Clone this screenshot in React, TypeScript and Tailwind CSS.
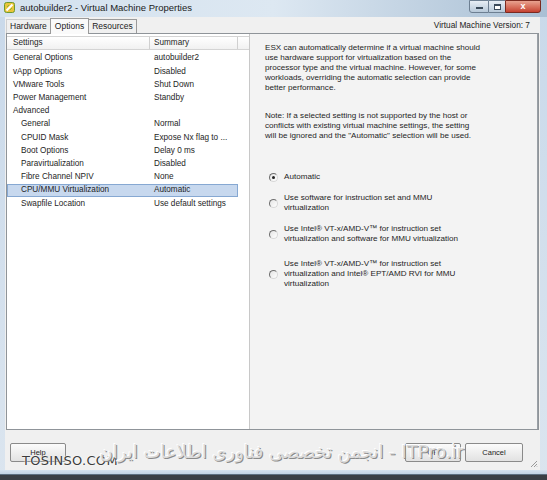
import React from "react";

const rows: { name: string; summary: string; indent?: boolean; selected?: boolean }[] = [
  { name: "General Options", summary: "autobuilder2" },
  { name: "vApp Options", summary: "Disabled" },
  { name: "VMware Tools", summary: "Shut Down" },
  { name: "Power Management", summary: "Standby" },
  { name: "Advanced", summary: "" },
  { name: "General", summary: "Normal", indent: true },
  { name: "CPUID Mask", summary: "Expose Nx flag to ...", indent: true },
  { name: "Boot Options", summary: "Delay 0 ms", indent: true },
  { name: "Paravirtualization", summary: "Disabled", indent: true },
  { name: "Fibre Channel NPIV", summary: "None", indent: true },
  { name: "CPU/MMU Virtualization", summary: "Automatic", indent: true, selected: true },
  { name: "Swapfile Location", summary: "Use default settings", indent: true },
];

function Radio({ checked }: { checked?: boolean }) {
  return (
    <div className="w-[9px] h-[9px] shrink-0 rounded-full border border-l-[#6f6f6f] border-t-[#6f6f6f] border-r-[#d8d8d8] border-b-[#d8d8d8] bg-gradient-to-br from-[#e4e4e4] to-white flex items-center justify-center">
      {checked && <div className="w-[3px] h-[3px] rounded-full bg-[#222]" />}
    </div>
  );
}

function Btn({ label, w }: { label: string; w: string }) {
  return (
    <div
      className={`${w} h-[19px] rounded-[2px] border border-[#8a8a8a] bg-gradient-to-b from-[#fbfbfb] to-[#e2e2e2] flex items-center justify-center text-[7.5px] text-[#222]`}
    >
      {label}
    </div>
  );
}

export default function App() {
  return (
    <div className="w-[547px] h-[480px] relative overflow-hidden flex flex-col bg-gradient-to-b from-[#c9d9ea] to-[#dbe5ef] font-['Liberation_Sans',Arial,sans-serif] text-[#1e1e1e]">
      {/* Title bar */}
      <div className="h-[17px] shrink-0 flex items-start bg-gradient-to-r from-[#d3e1ee] via-[#dde8f2] to-[#a9bfd4]">
        <svg className="ml-[4px] mt-[2px]" width="11" height="11" viewBox="0 0 11 11">
          <rect x="0.5" y="0.5" width="10" height="10" rx="2" fill="#e9c53a" stroke="#6e9a2e" />
          <path d="M2.5 8.5 L8.5 2.5" stroke="#ffffff" strokeWidth="2" />
          <path d="M3 5 L5 3 M6 8 L8 6" stroke="#8fae3c" strokeWidth="1" />
        </svg>
        <div className="ml-[5px] text-[9.5px] leading-[15px] text-[#1b1b1b]">autobuilder2 - Virtual Machine Properties</div>
        <div className="ml-auto mr-[6px] flex h-[13px]">
          <div className="w-[20px] h-full border border-[#6d7f92] rounded-bl-[3px] bg-gradient-to-b from-[#e7eef5] to-[#b7c8d9] flex items-end justify-center pb-[3px]">
            <div className="w-[7px] h-[2px] border border-[#3a4a5a] bg-white" />
          </div>
          <div className="w-[16px] h-full border-y border-[#6d7f92] bg-gradient-to-b from-[#e7eef5] to-[#b7c8d9] flex items-center justify-center">
            <div className="w-[7px] h-[6px] border border-[#3a4a5a] border-t-2 bg-white" />
          </div>
          <div className="w-[36px] h-full border border-[#7a2a20] rounded-br-[3px] bg-gradient-to-b from-[#e8a290] to-[#c54030] flex items-center justify-center text-white text-[9px] font-bold leading-none">
            x
          </div>
        </div>
      </div>

      {/* Client area */}
      <div className="ml-[5px] w-[535px] h-[453px] shrink-0 bg-[#f0f0f0] flex flex-col">
        {/* Tabs */}
        <div className="h-[16px] shrink-0 flex items-end pl-[1px] text-[8.5px]">
          <div className="h-[14px] px-[3px] flex items-center border border-b-0 border-r-0 border-[#d0d0d0] text-[#222]">Hardware</div>
          <div className="h-[16px] px-[4px] flex items-center border border-b-0 border-[#9a9a9a] bg-[#fafafa] text-[#222] relative top-[1px]">Options</div>
          <div className="h-[14px] px-[3px] flex items-center border border-b-0 border-l-0 border-[#9a9a9a] text-[#222]">Resources</div>
          <div className="ml-auto mr-[10px] self-center text-[8.3px] text-[#222]">Virtual Machine Version: 7</div>
        </div>

        {/* Tab page */}
        <div className="ml-[1px] w-[533px] h-[397px] shrink-0 border border-[#8f9499] bg-white flex">
          {/* Left list */}
          <div className="w-[243px] shrink-0 border-r border-[#c8c8c8] bg-white pt-[2px] text-[8.2px]">
            <div className="h-[14px] flex border-y border-[#d4d4d4] bg-gradient-to-b from-white to-[#f1f1f1]">
              <div className="w-[143px] pl-[6px] flex items-center border-r border-[#d0d0d0]">Settings</div>
              <div className="w-[88px] pl-[4px] flex items-center border-r border-[#d0d0d0]">Summary</div>
              <div className="flex-1" />
            </div>
            <div className="pt-[2px]">
              {rows.map((r) => (
                <div
                  key={r.name}
                  className={`h-[13.2px] w-[231px] flex items-center ${
                    r.selected ? "bg-[#c7d8ee] border border-[#86a8d2]" : "border border-transparent"
                  }`}
                >
                  <div className={`w-[142px] shrink-0 ${r.indent ? "pl-[13px]" : "pl-[5px]"}`}>{r.name}</div>
                  <div className="pl-[4px] whitespace-nowrap">{r.summary}</div>
                </div>
              ))}
            </div>
          </div>

          {/* Right panel */}
          <div className="flex-1 bg-[#f3f3f3] border-r border-[#9aa0a6] text-[8.1px] leading-[10px] text-[#1e1e1e]">
            <div className="pl-[15px] pt-[9px]">
              <div>ESX can automatically determine if a virtual machine should</div>
              <div>use hardware support for virtualization based on the</div>
              <div>processor type and the virtual machine. However, for some</div>
              <div>workloads, overriding the automatic selection can provide</div>
              <div>better performance.</div>
            </div>
            <div className="pl-[15px] mt-[18px]">
              <div>Note: If a selected setting is not supported by the host or</div>
              <div>conflicts with existing virtual machine settings, the setting</div>
              <div>will be ignored and the "Automatic" selection will be used.</div>
            </div>
            <div className="pl-[19px] mt-[31px] flex flex-col">
              <div className="flex items-center gap-[6px]">
                <Radio checked />
                <div>Automatic</div>
              </div>
              <div className="flex items-center gap-[6px] mt-[11px]">
                <Radio />
                <div>
                  <div>Use software for instruction set and MMU</div>
                  <div>virtualization</div>
                </div>
              </div>
              <div className="flex items-center gap-[6px] mt-[11px]">
                <Radio />
                <div>
                  <div>Use Intel® VT-x/AMD-V™ for instruction set</div>
                  <div>virtualization and software for MMU virtualization</div>
                </div>
              </div>
              <div className="flex items-center gap-[6px] mt-[15px]">
                <Radio />
                <div>
                  <div>Use Intel® VT-x/AMD-V™ for instruction set</div>
                  <div>virtualization and Intel® EPT/AMD RVI for MMU</div>
                  <div>virtualization</div>
                </div>
              </div>
            </div>
          </div>
        </div>

        {/* Buttons row */}
        <div className="flex-1 flex items-start pt-[13px] pl-[5px] pr-[17px] relative">
          <Btn label="Help" w="w-[56px]" />
          <div className="ml-auto flex gap-[4px]">
            <Btn label="OK" w="w-[56px]" />
            <Btn label="Cancel" w="w-[58px]" />
          </div>
          <svg className="absolute right-[2px] bottom-[2px]" width="9" height="9" viewBox="0 0 9 9">
            <path d="M8 2 L2 8 M8 5 L5 8 M8 7.5 L7.5 8" stroke="#9a9a9a" strokeWidth="1" />
          </svg>
        </div>
      </div>

      {/* Bottom frame */}
      <div className="h-[5px] shrink-0 bg-gradient-to-b from-[#d6e2ee] to-[#c3d3e3] border-b border-[#5e6f80]" />
      <div className="flex-1 bg-[#3b3f44]" />

      {/* Watermark overlay */}
      <div className="absolute left-[22px] top-[451px] text-[13px] tracking-[0.3px] text-[#3c3c3c] font-['DejaVu_Sans',sans-serif] [text-shadow:0_0_2px_#ffffff,0_0_1px_#ffffff]">
        TOSINSO.COM
      </div>
      <div
        dir="rtl"
        className="absolute left-[120px] top-[438px] w-[344px] text-[18px] whitespace-nowrap text-[#dcdcdc] font-['DejaVu_Sans',sans-serif] [text-shadow:1px_1px_0_#8a8a8a,-1px_-1px_0_#ffffff]"
      >
        ITPro.ir - انجمن تخصصی فناوری اطلاعات ایران
      </div>
    </div>
  );
}
